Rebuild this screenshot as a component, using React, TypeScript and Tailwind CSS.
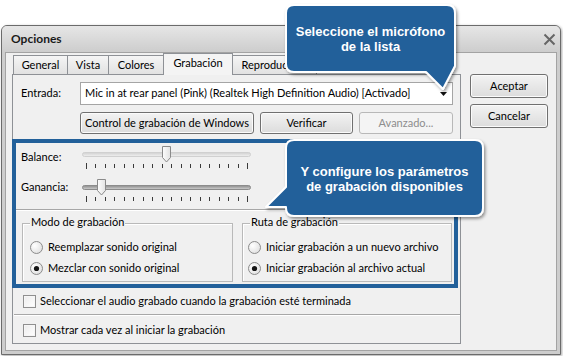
import React from "react";

const ticks = Array.from({ length: 18 }, (_, i) => 4 + Math.round(i * 9.47));

function Slider({ thumb, dark, id }: { thumb: number; dark?: boolean; id: string }) {
  return (
    <svg width="170" height="24" viewBox="0 0 170 24">
      <defs>
        <linearGradient id={`track-${id}`} x1="0" y1="0" x2="0" y2="1">
          <stop offset="0" stopColor={dark ? "#8a8a8a" : "#cfcfcf"} />
          <stop offset="1" stopColor={dark ? "#d2d2d2" : "#f2f2f2"} />
        </linearGradient>
        <linearGradient id={`thumb-${id}`} x1="0" y1="0" x2="1" y2="0">
          <stop offset="0" stopColor="#fdfdfd" />
          <stop offset="1" stopColor="#e2e2e2" />
        </linearGradient>
      </defs>
      <rect x="0.5" y="7.5" width="168" height="4" rx="2" fill={`url(#track-${id})`} stroke={dark ? "#8c8c8c" : "#d0d0d0"} />
      {ticks.map((x, i) => {
        const edge = i === 0 || i === ticks.length - 1;
        return <rect key={i} x={x} y={edge ? 18 : 19} width="1" height={edge ? 6 : 4} fill="#3a3a3a" />;
      })}
      <path
        d={`M${thumb + 0.5} 1.5 h8 v11 l-4 4.5 l-4 -4.5 z`}
        fill={`url(#thumb-${id})`}
        stroke="#8a8a8a"
      />
    </svg>
  );
}

function Radio({ checked }: { checked?: boolean }) {
  return (
    <svg width="13" height="13" viewBox="0 0 13 13" className="shrink-0">
      <defs>
        <radialGradient id="rad" cx="0.35" cy="0.35" r="0.8">
          <stop offset="0" stopColor="#ffffff" />
          <stop offset="1" stopColor="#dcdcdc" />
        </radialGradient>
      </defs>
      <circle cx="6.5" cy="6.5" r="6" fill="url(#rad)" stroke="#8b8b8b" />
      {checked && <circle cx="6.5" cy="6.5" r="2.6" fill="#151515" />}
    </svg>
  );
}

function Checkbox() {
  return (
    <div className="h-[13px] w-[13px] shrink-0 border border-[#8f8f8f] bg-linear-to-br from-[#ececec] to-white shadow-[inset_0_0_0_1px_#f6f6f6]" />
  );
}

function Button({ label, disabled, className }: { label: string; disabled?: boolean; className: string }) {
  return (
    <div
      className={`flex items-center justify-center rounded-[3px] border ${
        disabled
          ? "border-[#b8b8b8] bg-[#f4f4f4] text-[#8d8d8d]"
          : "border-[#707070] bg-linear-to-b from-[#f3f3f3] to-[#dcdcdc] shadow-[inset_0_0_0_1px_#fbfbfb]"
      } ${className}`}
    >
      {label}
    </div>
  );
}

function Group({ title, pl, children }: { title: string; pl: string; children: React.ReactNode }) {
  return (
    <div className={`relative h-[59px] border border-[#b9b9b9] shadow-[inset_1px_1px_0_#ffffff] ${pl}`}>
      <span className="absolute -top-[9px] left-[7px] bg-[#f0f0f0] px-[1px] leading-[14px]">{title}</span>
      <div className="flex flex-col gap-[8px] pt-[17px]">{children}</div>
    </div>
  );
}

export default function App() {
  return (
    <div className="relative h-[356px] w-[563px] overflow-hidden bg-white font-['Lato',sans-serif] text-[11px] text-black">
      <div className="pl-[1px] pt-[25px]">
        <div className="flex h-[330px] w-[560px] flex-col rounded-t-[6px] border border-[#6b6b6b] bg-[#cdcdcd] shadow-[1px_1px_3px_rgba(0,0,0,0.35)]">
          {/* title bar */}
          <div className="flex h-[26px] items-center justify-between rounded-t-[5px] bg-linear-to-b from-[#e6e6e6] to-[#cdcdcd] pl-[9px] pr-[4px]">
            <span className="text-[12px] font-bold text-[#1a1a1a]">Opciones</span>
            <svg width="13" height="13" viewBox="0 0 13 13">
              <path d="M1.5 1.5 L11.5 11.5 M11.5 1.5 L1.5 11.5" stroke="#666" strokeWidth="2" />
            </svg>
          </div>

          <div className="flex flex-1 px-[3px] pb-[3px]">
            <div className="flex flex-1 items-start border border-[#a3a3a3] bg-[#f0f0f0] pl-[6px]">
              {/* tab control */}
              <div className="flex w-[449px] flex-col">
                <div className="relative z-10 flex h-[22px] items-end">
                  <div className="w-[1px]" />
                  <div className="mb-[1px] flex h-[19px] w-[55px] items-center justify-center border-x border-t border-[#8e9196] bg-linear-to-b from-[#f5f5f5] to-[#e2e2e2]">
                    General
                  </div>
                  <div className="mb-[1px] flex h-[19px] w-[41px] items-center justify-center border-r border-t border-[#8e9196] bg-linear-to-b from-[#f5f5f5] to-[#e2e2e2]">
                    Vista
                  </div>
                  <div className="mb-[1px] flex h-[19px] w-[55px] items-center justify-center border-r border-t border-[#8e9196] bg-linear-to-b from-[#f5f5f5] to-[#e2e2e2]">
                    Colores
                  </div>
                  <div className="-ml-[1px] flex h-[22px] w-[70px] items-center justify-center border-x border-t border-[#8e9196] bg-[#f4f4f4] pb-[2px]">
                    Grabación
                  </div>
                  <div className="mb-[1px] flex h-[19px] w-[84px] items-center justify-center border-r border-t border-[#8e9196] bg-linear-to-b from-[#f5f5f5] to-[#e2e2e2]">
                    Reproducción
                  </div>
                </div>

                <div className="-mt-[1px] flex h-[270px] flex-col border border-[#8e9196] bg-[#f0f0f0]">
                  {/* Entrada */}
                  <div className="mt-[7px] flex h-[23px] items-center">
                    <span className="w-[67px] pl-[8px]">Entrada:</span>
                    <div className="flex h-[23px] w-[373px] items-center justify-between border border-[#a5a5a5] bg-white pl-[4px] pr-[5px]">
                      <span>Mic in at rear panel (Pink) (Realtek High Definition Audio) [Activado]</span>
                      <svg width="7" height="4" viewBox="0 0 7 4">
                        <path d="M0 0 H7 L3.5 4 Z" fill="#111" />
                      </svg>
                    </div>
                  </div>

                  <div className="mt-[7px] flex h-[22px] gap-[6px] pl-[67px]">
                    <Button label="Control de grabación de Windows" className="w-[174px]" />
                    <Button label="Verificar" className="w-[93px]" />
                    <Button label="Avanzado..." disabled className="w-[94px]" />
                  </div>

                  {/* highlighted section */}
                  <div className="-ml-[1px] mt-[5px] flex h-[149px] w-[446px] flex-col border-4 border-[#22609a]">
                    <div className="mt-[2px] flex h-[24px]">
                      <span className="w-[66px] pl-[5px] pt-[5px] leading-[14px]">Balance:</span>
                      <Slider id="bal" thumb={80} />
                    </div>
                    <div className="mt-[9px] flex h-[24px]">
                      <span className="w-[66px] pl-[5px] pt-[2px] leading-[14px]">Ganancia:</span>
                      <Slider id="gan" thumb={15} dark />
                    </div>
                    <div className="mt-[7px] h-[1px] bg-[#a7a7a7]" />
                    <div className="h-[1px] bg-white" />
                    <div className="mt-[12px] flex gap-[9px] pl-[6px]">
                      <div className="w-[211px]">
                        <Group title="Modo de grabación" pl="pl-[7px]">
                          <label className="flex h-[13px] items-center gap-[5px]">
                            <Radio />
                            <span>Reemplazar sonido original</span>
                          </label>
                          <label className="flex h-[13px] items-center gap-[5px]">
                            <Radio checked />
                            <span>Mezclar con sonido original</span>
                          </label>
                        </Group>
                      </div>
                      <div className="w-[210px]">
                        <Group title="Ruta de grabación" pl="pl-[5px]">
                          <label className="flex h-[13px] items-center gap-[5px]">
                            <Radio />
                            <span>Iniciar grabación a un nuevo archivo</span>
                          </label>
                          <label className="flex h-[13px] items-center gap-[5px]">
                            <Radio checked />
                            <span>Iniciar grabación al archivo actual</span>
                          </label>
                        </Group>
                      </div>
                    </div>
                  </div>

                  <div className="mt-[7px] flex h-[13px] items-center gap-[4px] pl-[10px]">
                    <Checkbox />
                    <span>Seleccionar el audio grabado cuando la grabación esté terminada</span>
                  </div>
                  <div className="ml-[1px] mt-[6px] h-[1px] bg-[#a7a7a7]" />
                  <div className="ml-[1px] h-[1px] bg-white" />
                  <div className="mt-[8px] flex h-[13px] items-center gap-[4px] pl-[10px]">
                    <Checkbox />
                    <span>Mostrar cada vez al iniciar la grabación</span>
                  </div>
                </div>
              </div>

              {/* dialog buttons */}
              <div className="ml-[9px] mt-[21px] flex w-[78px] flex-col gap-[6px]">
                <Button label="Aceptar" className="h-[24px]" />
                <Button label="Cancelar" className="h-[24px]" />
              </div>
            </div>
          </div>
        </div>
      </div>

      {/* callouts */}
      <svg className="pointer-events-none absolute left-0 top-0 z-20" width="563" height="356" viewBox="0 0 563 356">
        <defs>
          <filter id="sh" x="-10%" y="-10%" width="130%" height="140%">
            <feDropShadow dx="1.5" dy="2" stdDeviation="1.5" floodColor="#000" floodOpacity="0.4" />
          </filter>
        </defs>
        <path
          d="M294 5 H447 Q455 5 455 13 V66 L443 89 L426 72 H294 Q286 72 286 64 V13 Q286 5 294 5 Z"
          fill="#23609a"
          stroke="#fff"
          strokeWidth="2"
          strokeLinejoin="round"
          filter="url(#sh)"
        />
        <path
          d="M294 140 H475 Q483 140 483 148 V208 Q483 216 475 216 H294 Q286 216 286 208 V207 L266 207 L286 187 V148 Q286 140 294 140 Z"
          fill="#23609a"
          stroke="#fff"
          strokeWidth="2"
          strokeLinejoin="round"
          filter="url(#sh)"
        />
      </svg>
      <div className="absolute left-[286px] top-[24px] z-20 w-[169px] text-center font-['Liberation_Sans',sans-serif] text-[13px] font-bold leading-[15px] text-white">
        Seleccione el micrófono
        <br />
        de la lista
      </div>
      <div className="absolute left-[286px] top-[164px] z-20 w-[197px] text-center font-['Liberation_Sans',sans-serif] text-[13px] font-bold leading-[15px] text-white">
        Y configure los parámetros
        <br />
        de grabación disponibles
      </div>
    </div>
  );
}
